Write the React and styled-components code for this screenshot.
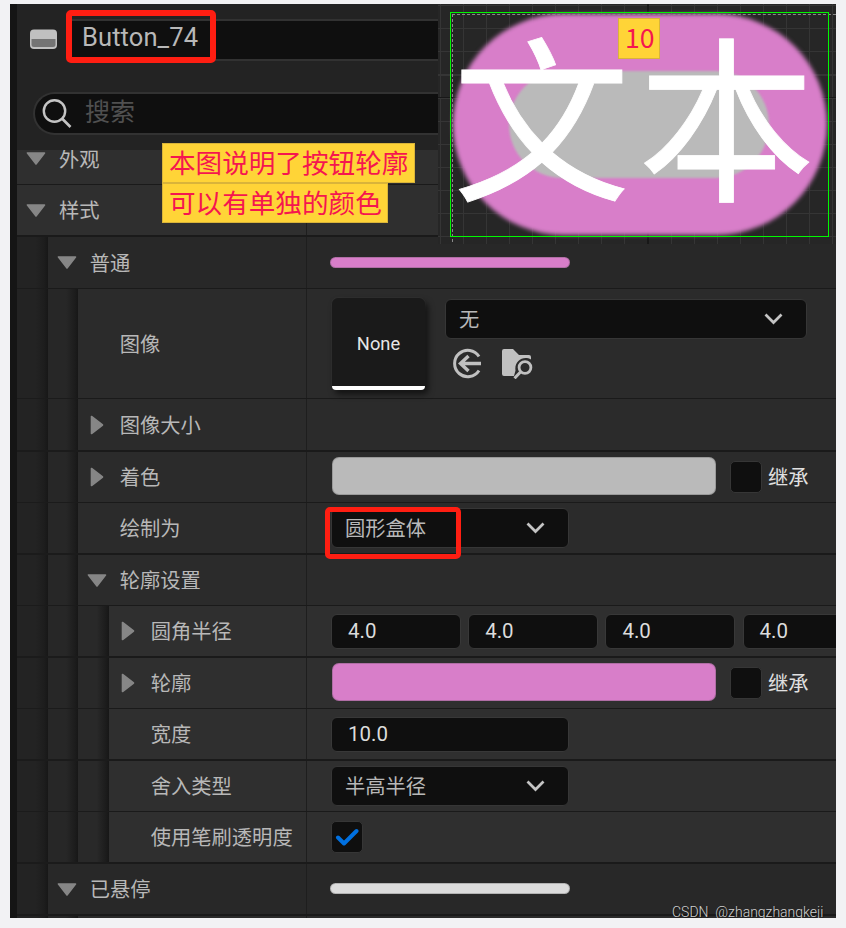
import React from "react";
import styled, { createGlobalStyle } from "styled-components";

const Global = createGlobalStyle`
  * { box-sizing: border-box; }
  body { margin: 0; background: #f2f2f4; overflow: hidden; }
`;

const cjk = `"Noto Sans CJK SC", sans-serif`;
const latin = `Roboto, "Noto Sans CJK SC", sans-serif`;

const Page = styled.div`
  width: 846px;
  height: 928px;
  padding: 4px 10px 10px;
`;

const Panel = styled.main`
  position: relative;
  display: flex;
  flex-direction: column;
  width: 826px;
  height: 914px;
  border-left: 7px solid #151515;
  background: #232323;
  overflow: hidden;
  font-family: ${cjk};
  font-size: 20.3px;
  color: #b8b8b8;
`;

const Header = styled.header`
  flex: none;
  width: 421px;
  height: 146px;
  padding-top: 15px;
`;

const NameRow = styled.div`
  display: flex;
  align-items: center;
  height: 42px;
  padding-left: 13px;
  gap: 12px;
`;

const NameField = styled.div`
  flex: 1;
  height: 42px;
  padding-left: 10px;
  border: 2px solid #323232;
  border-right: 0;
  background: #0f0f0f;
  font: 400 25.5px/33px ${latin};
  letter-spacing: 0.1px;
  color: #b8b8b8;
`;

const SearchField = styled.div`
  display: flex;
  align-items: center;
  height: 43px;
  margin: 31px 0 0 16px;
  padding-left: 7px;
  border: 2px solid #323232;
  border-right: 0;
  border-radius: 22px 0 0 22px;
  background: #0f0f0f;
  color: #505050;
  font-size: 25px;
  line-height: 30px;
  gap: 13px;
`;

const SearchText = styled.span`
  height: 38px;
`;

const Tree = styled.section`
  flex: 1;
  min-height: 0;
  overflow: hidden;
`;

const levelColor = ["#2f2f2f", "#282828", "#2b2b2b", "#2f2f2f"];
const gutterColor = ["#232323", "#272727", "#292929"];

const Row = styled.div`
  display: flex;
  height: ${(p) => p.$h}px;
  margin-top: ${(p) => p.$lift || 0}px;
  background: ${(p) => levelColor[p.$level]};
`;

const Gutter = styled.div`
  flex: none;
  width: ${(p) => (p.$i === 1 ? 30 : 31)}px;
  background: linear-gradient(
    to right,
    ${(p) => gutterColor[p.$i]} 60%,
    #1d1d1d 88%,
    #171717
  );
  border-bottom: ${(p) => p.$line}px solid #1b1b1b;
`;

const Cells = styled.div`
  flex: 1;
  min-width: 0;
  display: flex;
  border-bottom: ${(p) => p.$line}px solid #1a1a1a;
`;

const Label = styled.div`
  flex: none;
  display: flex;
  align-items: center;
  width: ${(p) => 290 - [0, 31, 61, 92][p.$level]}px;
  border-right: ${(p) => (p.$divided ? 1 : 0)}px solid #1e1e1e;
  white-space: nowrap;
`;

const ArrowSlot = styled.span`
  flex: none;
  display: flex;
  width: ${(p) => (p.$level ? 41.7 : 42)}px;
  padding-left: ${(p) => (p.$open ? 9 : 12)}px;
`;

const Caption = styled.span`
  padding-bottom: 2px;
`;

const Value = styled.div`
  flex: 1;
  min-width: 0;
  display: flex;
  align-items: center;
  padding-left: ${(p) => (p.$wide ? 23 : 25)}px;
`;

const ColorBar = styled.div`
  flex: none;
  width: ${(p) => (p.$thin ? 240 : 384)}px;
  height: ${(p) => (p.$thin ? 11 : 38)}px;
  margin-bottom: ${(p) => (p.$thin ? 1 : 2)}px;
  border-radius: ${(p) => (p.$thin ? 5.5 : 7)}px;
  border: 1px solid #4444;
  background: ${(p) => p.$color};
  background-clip: border-box;
`;

const Box = styled.div`
  flex: none;
  display: flex;
  align-items: center;
  justify-content: center;
  width: 32px;
  height: 32px;
  border: 1px solid #363636;
  border-radius: 5px;
  background: #0f0f0f;
  margin-left: ${(p) => (p.$after ? 14 : -1)}px;
`;

const Inherit = styled(Caption)`
  margin-left: 6px;
  color: #e0e0e0;
`;

const Select = styled.div`
  position: relative;
  flex: none;
  display: flex;
  align-items: center;
  justify-content: space-between;
  width: ${(p) => p.$w}px;
  height: 40px;
  margin-left: -1px;
  padding: 0 23px 0 13px;
  border: 1px solid #363636;
  border-radius: 6px;
  background: #0f0f0f;
`;

const Fields = styled.div`
  display: flex;
  gap: 8.2px;
`;

const NumberField = styled.div`
  flex: none;
  width: ${(p) => p.$w}px;
  height: 35px;
  margin-left: -1px;
  padding-left: 16px;
  border: 1px solid #383838;
  border-radius: 6px;
  background: #0f0f0f;
  font: 400 20.5px/33px ${latin};
  color: #dcdcdc;
`;

const Thumb = styled.div`
  flex: none;
  width: 93px;
  height: 92px;
  margin-top: 1px;
  border-radius: 6px 6px 4px 4px;
  border-bottom: 4px solid #fff;
  background: #1a1a1a;
  box-shadow: 3px 4px 6px #0009, 0 0 0 1px #303030;
  font: 400 18.3px/92px ${latin};
  color: #e6e6e6;
  text-align: center;
`;

const Picker = styled.div`
  margin: 0 0 9px 21px;
`;

const PickerIcons = styled.div`
  display: flex;
  gap: 19px;
  margin: 9px 0 0 6px;
`;

const RedFrame = styled.div`
  position: absolute;
  left: ${(p) => p.$x}px;
  top: ${(p) => p.$y}px;
  width: ${(p) => p.$w}px;
  height: ${(p) => p.$h}px;
  border: ${(p) => p.$t}px solid #ff1e12;
  border-radius: 5px;
`;

const Viewport = styled.div`
  position: absolute;
  left: 421px;
  top: 0;
  width: 398px;
  height: 240px;
  overflow: hidden;
  background:
    linear-gradient(#181818, #181818) 209px 0 / 2px 100% no-repeat,
    linear-gradient(#181818, #181818) 0 93px / 100% 1px no-repeat,
    repeating-linear-gradient(to right, transparent 0 1.5px, #353535 1.5px 2.7px, transparent 2.7px 23.1px),
    repeating-linear-gradient(to bottom, transparent 0 1px, #353535 1px 2.2px, transparent 2.2px 23.1px),
    #262626;
`;

const Pill = styled.div`
  position: absolute;
  left: ${(p) => p.$x}px;
  top: ${(p) => p.$y}px;
  width: ${(p) => p.$w}px;
  height: ${(p) => p.$h}px;
  border-radius: 999px;
  background: ${(p) => p.$color};
  filter: blur(${(p) => p.$soft}px);
`;

const DashedGuide = styled.div`
  position: absolute;
  left: 14px;
  top: 10px;
  right: 0;
  height: 228px;
  border: 0 dashed #8a8a8a;
  border-width: 1px 0 0 1px;
`;

const Selection = styled.div`
  position: absolute;
  left: 12px;
  top: 8px;
  width: 379px;
  height: 225px;
  border: 1px solid #00f800;
`;

const BigText = styled.div`
  position: absolute;
  left: 15px;
  top: 12px;
  height: 190px;
  font-size: 177px;
  line-height: 190px;
  letter-spacing: 8px;
  color: #fff;
  -webkit-text-stroke: 0.8px #fff;
  white-space: nowrap;
`;

const Note = styled.div`
  position: absolute;
  left: ${(p) => p.$x}px;
  top: ${(p) => p.$y}px;
  width: ${(p) => p.$w}px;
  height: ${(p) => p.$h || 40}px;
  border: 1px solid #d9b43a;
  background: #ffd437;
  color: #f5164f;
  font-size: 26.6px;
  line-height: 36px;
  padding-left: 6px;
  white-space: nowrap;
`;

const Watermark = styled.div`
  position: absolute;
  left: 655px;
  top: 899px;
  width: 160px;
  font: 300 14px/18px ${latin};
  color: #d0d0d0;
  white-space: pre;
  text-shadow: 1px 1px 1px #0008;
`;

const Arrow = ({ open }) =>
  open ? (
    <svg width="20" height="13" viewBox="0 0 20 13">
      <path d="M1.5 1h17L10 12z" fill="#868686" stroke="#868686" strokeWidth="1.6" strokeLinejoin="round" />
    </svg>
  ) : (
    <svg width="14" height="20" viewBox="0 0 14 20">
      <path d="M1.5 1.5v17L12.5 10z" fill="#868686" stroke="#868686" strokeWidth="1.6" strokeLinejoin="round" />
    </svg>
  );

const Chevron = () => (
  <svg width="19" height="12" viewBox="0 0 19 12">
    <path d="M1.5 1.5l8 8 8-8" fill="none" stroke="#c4c4c4" strokeWidth="2.7" />
  </svg>
);

const Check = () => (
  <svg width="24" height="18" viewBox="0 0 24 18">
    <path d="M3 9.500l6 6L21.500 3" fill="none" stroke="#0070e0" strokeWidth="4" strokeLinecap="round" strokeLinejoin="round" />
  </svg>
);

const ButtonIcon = () => (
  <svg width="28" height="22" viewBox="0 0 28 22">
    <rect x="0" y="0.500" width="27" height="19.500" rx="4" fill="#c0c0c0" />
    <path d="M1.500 10h24v5.500a2.500 2.500 0 0 1-2.500 2.500h-19A2.500 2.500 0 0 1 1.500 15.500z" fill="#747474" />
  </svg>
);

const SearchIcon = () => (
  <svg width="30" height="30" viewBox="0 0 30 30">
    <circle cx="12.500" cy="12" r="10.700" fill="none" stroke="#c4c4c4" strokeWidth="2.400" />
    <path d="M20 19.500l8.500 8.500" stroke="#c4c4c4" strokeWidth="2.700" />
  </svg>
);

const UseIcon = () => (
  <svg width="30" height="31" viewBox="0 0 30 31">
    <path d="M27 8.500A13.200 13.200 0 1 0 27 22.500" fill="none" stroke="#c0c0c0" strokeWidth="3" />
    <path d="M29 15.500H9M16.500 8L8.500 15.500l8 7.500" fill="none" stroke="#c0c0c0" strokeWidth="3.400" />
  </svg>
);

const BrowseIcon = () => (
  <svg width="32" height="31" viewBox="0 0 32 31">
    <path d="M1 3a2 2 0 0 1 2-2h9l6 6h10a2 2 0 0 1 2 2v2.500c-8-4.500-17 2-15.500 11L13 28H3a2 2 0 0 1-2-2z" fill="#c0c0c0" />
    <circle cx="24" cy="19.500" r="5.900" fill="none" stroke="#c0c0c0" strokeWidth="2.800" />
    <path d="M19.500 24l-6 6.300" stroke="#c0c0c0" strokeWidth="3" />
  </svg>
);

function Property({ level, label, h, line = 1, lift, arrow, wide, divided = true, children }) {
  return (
    <Row $h={h} $level={level} $lift={lift}>
      {Array.from({ length: level }, (_, i) => (
        <Gutter key={i} $i={i} $line={line} />
      ))}
      <Cells $line={line}>
        <Label $level={level} $divided={divided}>
          <ArrowSlot $level={level} $open={arrow === "open"}>
            {arrow && <Arrow open={arrow === "open"} />}
          </ArrowSlot>
          <Caption>{label}</Caption>
        </Label>
        <Value $wide={wide}>{children}</Value>
      </Cells>
    </Row>
  );
}

const ColorWithInherit = ({ color }) => (
  <>
    <ColorBar $color={color} />
    <Box $after />
    <Inherit>继承</Inherit>
  </>
);

export default function App() {
  return (
    <Page>
      <Global />
      <Panel>
        <Header>
          <NameRow>
            <ButtonIcon />
            <NameField>Button_74</NameField>
          </NameRow>
          <SearchField>
            <SearchIcon />
            <SearchText>搜索</SearchText>
          </SearchField>
        </Header>

        <Tree>
          <Property level={0} label="外观" h={52} lift={-17} arrow="open" divided={false} />
          <Property level={0} label="样式" h={52} line={2} arrow="open" />
          <Property level={1} label="普通" h={52} arrow="open" wide>
            <ColorBar $thin $color="#d87ec9" />
          </Property>
          <Property level={2} label="图像" h={110}>
            <Thumb>None</Thumb>
            <Picker>
              <Select $w={362}>
                <Caption>无</Caption>
                <Chevron />
              </Select>
              <PickerIcons>
                <UseIcon />
                <BrowseIcon />
              </PickerIcons>
            </Picker>
          </Property>
          <Property level={2} label="图像大小" h={53} line={2} arrow="closed" />
          <Property level={2} label="着色" h={51} arrow="closed">
            <ColorWithInherit color="#bababa" />
          </Property>
          <Property level={2} label="绘制为" h={52} line={2}>
            <Select $w={238}>
              <Caption>圆形盒体</Caption>
              <Chevron />
              <RedFrame $x={-7} $y={-2} $w={136} $h={52} $t={5} />
            </Select>
          </Property>
          <Property level={2} label="轮廓设置" h={51} arrow="open" />
          <Property level={3} label="圆角半径" h={52} line={2} arrow="closed">
            <Fields>
              {[0, 1, 2, 3].map((i) => (
                <NumberField key={i} $w={130}>4.0</NumberField>
              ))}
            </Fields>
          </Property>
          <Property level={3} label="轮廓" h={51} arrow="closed">
            <ColorWithInherit color="#d87ec9" />
          </Property>
          <Property level={3} label="宽度" h={52} line={2}>
            <NumberField $w={238}>10.0</NumberField>
          </Property>
          <Property level={3} label="舍入类型" h={51}>
            <Select $w={238}>
              <Caption>半高半径</Caption>
              <Chevron />
            </Select>
          </Property>
          <Property level={3} label="使用笔刷透明度" h={52} line={2}>
            <Box>
              <Check />
            </Box>
          </Property>
          <Property level={1} label="已悬停" h={52} line={2} arrow="open" wide>
            <ColorBar $thin $color="#dcdcdc" />
          </Property>
          <Property level={2} label="" h={3} line={0} />
        </Tree>

        <RedFrame $x={49} $y={6} $w={150} $h={53} $t={6} />

        <Viewport>
          <Pill $x={15} $y={10} $w={374} $h={221} $color="#d87ec9" $soft={2.2} />
          <Pill $x={71} $y={67} $w={260} $h={107} $color="#bababa" $soft={1} />
          <DashedGuide />
          <Selection />
          <BigText>文本</BigText>
          <Note $x={180} $y={14} $w={42} $h={41}>10</Note>
        </Viewport>

        <Note $x={145} $y={139} $w={253}>本图说明了按钮轮廓</Note>
        <Note $x={145} $y={179} $w={226}>可以有单独的颜色</Note>
        <Watermark>CSDN  @zhangzhangkeji</Watermark>
      </Panel>
    </Page>
  );
}
